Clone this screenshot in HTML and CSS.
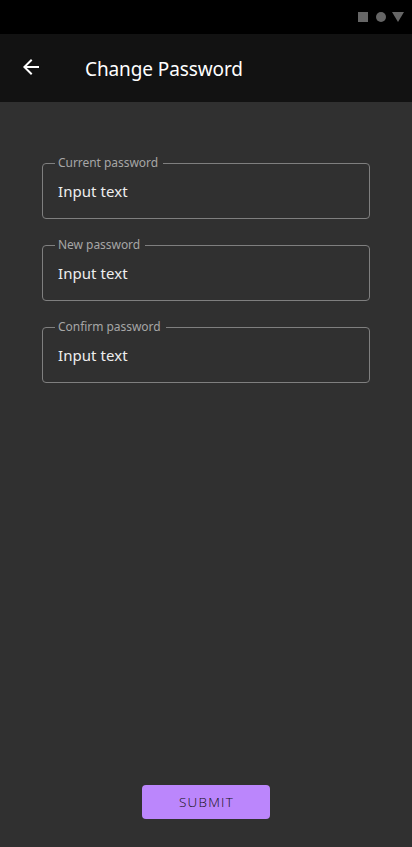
FILE: index.html
```html
<!DOCTYPE html>
<html lang="en">
<head>
<meta charset="utf-8">
<title>Change Password</title>
<link rel="stylesheet" href="styles.css">
</head>
<body>
<div class="status-bar">
  <svg width="48" height="12" viewBox="0 0 48 12" fill="#666"><path d="M1 1h10v10H1z"/><circle cx="24" cy="6" r="5"/><path d="M35 1h12l-6 10z"/></svg>
</div>
<header class="app-bar">
  <svg class="back" width="24" height="24" viewBox="0 0 24 24" fill="#fff"><path d="M20 11H7.83l5.59-5.59L12 4l-8 8 8 8 1.41-1.41L7.83 13H20v-2z"/></svg>
  <h1 class="title">Change Password</h1>
</header>
<main class="content">
  <form class="form">
    <fieldset class="field"><legend><span class="label">Current password</span></legend><div class="value"><span class="text">Input text</span></div></fieldset>
    <fieldset class="field"><legend><span class="label">New password</span></legend><div class="value"><span class="text">Input text</span></div></fieldset>
    <fieldset class="field"><legend><span class="label">Confirm password</span></legend><div class="value"><span class="text">Input text</span></div></fieldset>
  </form>
  <button class="submit" type="button">SUBMIT</button>
</main>
</body>
</html>
```
FILE: styles.css
```css
* { box-sizing: border-box; }
body {
  margin: 0;
  height: 847px;
  display: flex;
  flex-direction: column;
  background: #303030;
  color: #fff;
  font-family: "Segoe UI", "Noto Sans", sans-serif;
  overflow: hidden;
}
.status-bar {
  height: 34px;
  display: flex;
  justify-content: flex-end;
  align-items: center;
  padding-right: 7px;
  background: #000;
}
.app-bar {
  height: 68px;
  display: flex;
  align-items: center;
  padding-left: 19px;
  background: #121212;
}
.back { margin-top: -2px; }
.title { margin: 2px 0 0 42px; font-size: 19px; line-height: 28px; font-weight: 400; letter-spacing: -.1px; }
.content {
  flex: 1;
  display: flex;
  flex-direction: column;
  align-items: center;
  justify-content: space-between;
  padding: 53px 42px 28px;
}
.form { width: 100%; display: flex; flex-direction: column; gap: 18px; }
.field {
  height: 64px;
  min-width: 0;
  margin: 0;
  padding: 0 15px 0 12px;
  border: 1px solid #7f7f7f;
  border-radius: 4px;
}
.field legend { height: 16px; padding: 0 5px 0 3px; margin: 0; font-size: 12px; line-height: 16px; color: #a6a6a6; }
.label { letter-spacing: -.04px; }
.value { padding: 8px 3px 0; font-size: 15px; line-height: 24px; letter-spacing: .06px; color: #eee; }
.submit {
  width: 128px;
  height: 34px;
  padding: 0 0 0 1px;
  border: 0;
  border-radius: 4px;
  background: #bb86fc;
  color: #111;
  font: 300 13.5px/34px "Segoe UI", "Open Sans", "Noto Sans", sans-serif;
  letter-spacing: 1.25px;
}
```
